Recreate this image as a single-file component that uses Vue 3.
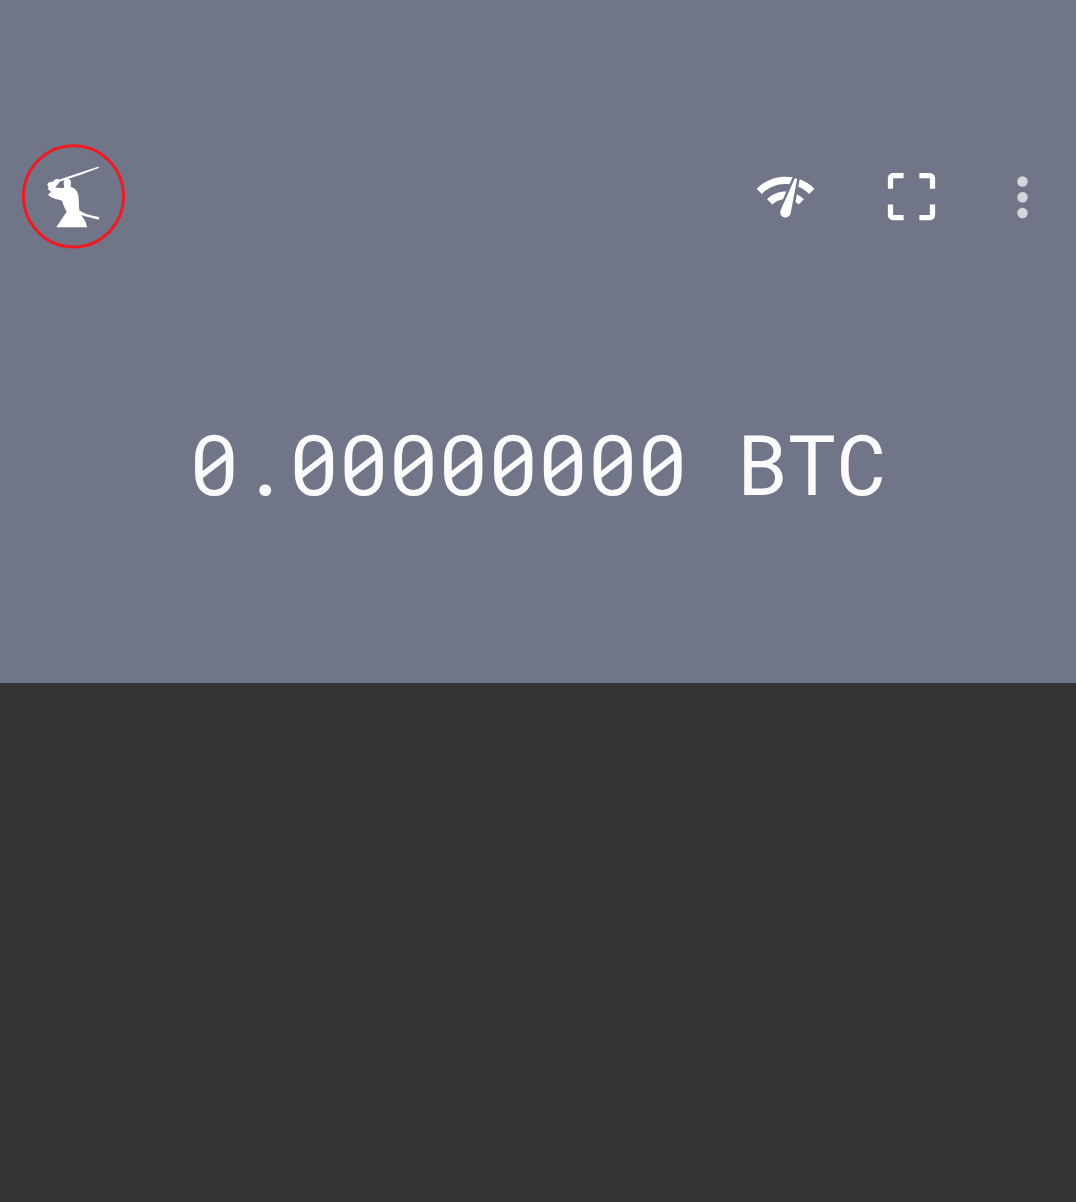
<script setup>
import { ref } from 'vue'

const balance = ref(0)
</script>

<template>
  <div class="wallet">
    <section class="hero">
      <header class="toolbar">
        <button class="logo" type="button" aria-label="Account">
          <svg viewBox="24 24 312 315" aria-hidden="true">
            <ellipse cx="178.500" cy="181" rx="150" ry="152" fill="none" stroke="#f01a22" stroke-width="9" />
            <g fill="#fff">
              <path d="M252 92L256 95L200 116L136 137L132 132L170 119Z" />
              <ellipse cx="160" cy="141" rx="11" ry="13" />
              <path
                fill-rule="evenodd"
                d="M150 148L170 148V153C181 155 190 163 193 178C195 192 194 209 196 223C211 234 233 239 256 244L254 251C235 246 216 242 201 237C211 249 218 261 219 274H127L158 227C152 217 148 206 144 194C132 190 113 188 103 177C103 173 108 170 112 168L101 158L104 153L100 146C102 137 110 138 117 137C120 131 127 127 134 130L138 135C135 142 129 148 124 154C132 156 141 156 150 155Z"
              />
            </g>
          </svg>
        </button>
        <nav class="actions" aria-label="Wallet actions">
          <button class="action" type="button" aria-label="Network">
            <svg viewBox="0 0 24 24" aria-hidden="true">
              <path d="M15.9 5c-.17 0-.32.09-.41.23l-.07.15-5.18 11.65c-.16.29-.26.61-.26.96 0 1.11.9 2.01 2.01 2.01.96 0 1.77-.68 1.96-1.59l.01-.03L16.4 5.500c0-.28-.22-.5-.5-.5zM1 9l2 2c2.880-2.880 6.790-4.080 10.530-3.620l1.190-2.680C9.890 3.840 4.740 5.270 1 9zm20 2l2-2c-1.640-1.640-3.550-2.820-5.590-3.570l-.53 2.820c1.500.62 2.900 1.530 4.120 2.750zm-4 4l2-2c-.8-.8-1.700-1.420-2.660-1.890l-.55 2.920c.42.27.83.59 1.210.97zM5 13l2 2c1.130-1.130 2.560-1.790 4.030-2l1.280-2.880c-2.630-.08-5.300.87-7.310 2.880z" />
            </svg>
          </button>
          <button class="action" type="button" aria-label="Scan code">
            <svg viewBox="0 0 24 24" aria-hidden="true">
              <path d="M3 5v4h2V5h4V3H5c-1.100 0-2 .9-2 2zm2 10H3v4c0 1.100.9 2 2 2h4v-2H5v-4zm14 4h-4v2h4c1.100 0 2-.9 2-2v-4h-2v4zm0-16h-4v2h4v4h2V5c0-1.100-.9-2-2-2z" />
            </svg>
          </button>
          <button class="action more" type="button" aria-label="More options">
            <svg viewBox="0 0 24 24" aria-hidden="true">
              <circle cx="12" cy="6.300" r="2" />
              <circle cx="12" cy="12.300" r="2" />
              <circle cx="12" cy="18.300" r="2" />
            </svg>
          </button>
        </nav>
      </header>
      <h1 class="balance">{{ balance.toFixed(8) }} BTC</h1>
    </section>
    <main class="transactions" aria-label="Transactions"></main>
  </div>
</template>

<style>
body {
  margin: 0;
  background: #343434;
}
</style>

<style scoped>
.wallet {
  display: flex;
  flex-direction: column;
  min-height: 100vh;
  background: #343434;
}

.hero {
  background: #707587;
}

.toolbar {
  display: flex;
  align-items: center;
  justify-content: space-between;
  padding: 144px 22px 0;
}

button {
  padding: 0;
  border: 0;
  background: none;
  cursor: pointer;
}

svg {
  display: block;
  width: 100%;
  height: 100%;
}

.logo {
  width: 104px;
  height: 105px;
  border-radius: 50%;
}

.actions {
  display: flex;
  align-items: center;
}

.action {
  width: 63px;
  height: 63px;
  margin-left: 63px;
  fill: #fff;
}

.more {
  margin-left: 48px;
  fill: #d4d6db;
}

.balance {
  margin: 0;
  padding: 164px 0 170px;
  color: #fafafa;
  font-family: "Roboto Mono", "DejaVu Sans Mono", monospace;
  font-size: 83px;
  font-weight: 400;
  line-height: 100px;
  text-align: center;
  white-space: nowrap;
}

.transactions {
  flex: 1;
}
</style>
